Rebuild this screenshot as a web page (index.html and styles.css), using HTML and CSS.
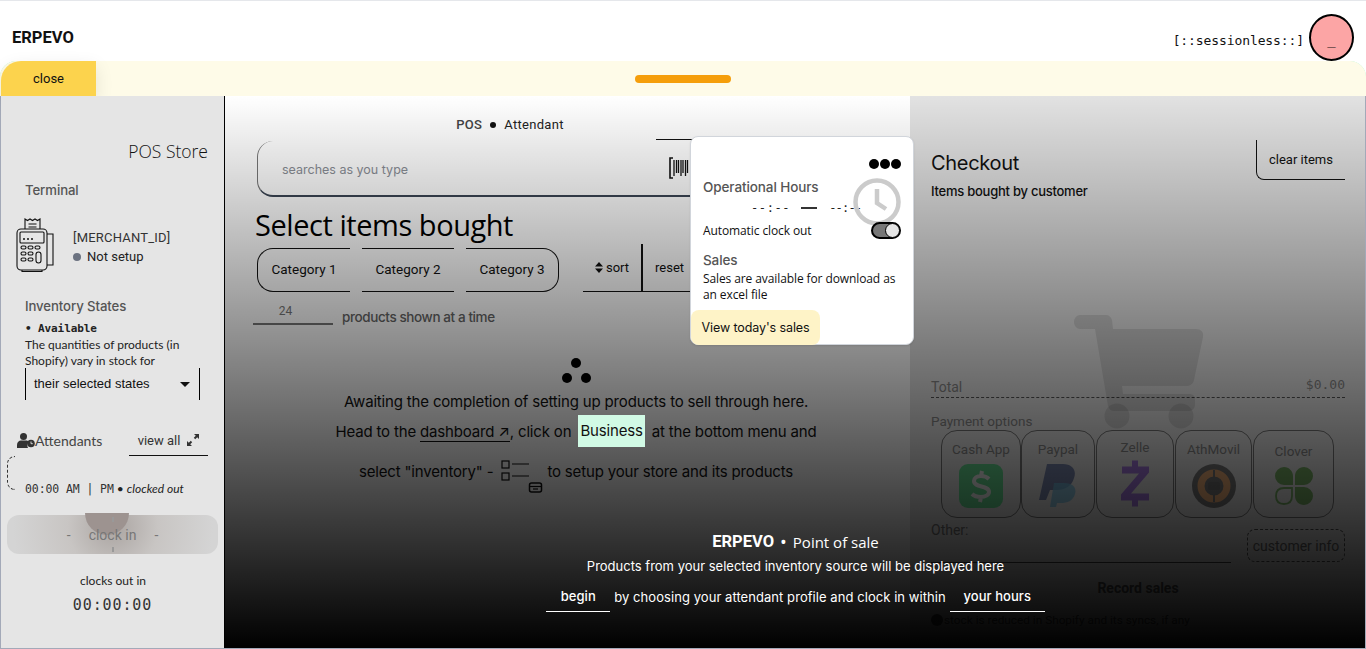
FILE: index.html
```html
<!DOCTYPE html>
<html lang="en">
<head>
<meta charset="utf-8">
<title>ERPEVO POS</title>
<link rel="stylesheet" href="styles.css">
</head>
<body>
<header class="topbar">
  <div class="brand">ERPEVO</div>
  <div class="session">
    <span class="session-text">[::sessionless::]</span>
    <span class="avatar">_</span>
  </div>
</header>
<div class="panel">
  <div class="drawerbar">
    <button class="close">close</button>
    <span class="handle"></span>
  </div>
  <div class="columns">
    <aside class="side">
      <div class="store">POS Store</div>
      <div class="side-head terminal-head">Terminal</div>
      <div class="terminal">
        <svg class="term-icon" viewBox="0 0 42 56" fill="none" stroke="#111" stroke-width="1.1">
          <path d="M9 13V3l2.5 1.5L14 3l2.5 1.5L19 3l2.500 1.500L24 3v10"/>
          <path d="M12.500 8h8M12.500 11h8"/>
          <rect x="1" y="13" width="30" height="41" rx="4"/>
          <rect x="4" y="16" width="24" height="11" rx="1"/>
          <path d="M7 23h2M11 23h2M15 23h2" stroke-width="1.400"/>
          <rect x="5" y="30" width="5" height="3" rx="1.500"/><rect x="12" y="30" width="5" height="3" rx="1.500"/><rect x="19" y="30" width="5" height="3" rx="1.500"/>
          <rect x="5" y="36" width="5" height="3" rx="1.500"/><rect x="12" y="36" width="5" height="3" rx="1.500"/>
          <rect x="5" y="42" width="5" height="3" rx="1.500"/><rect x="12" y="42" width="5" height="3" rx="1.500"/>
          <rect x="20" y="36" width="5" height="11" rx="2.500"/>
          <path d="M31 18h6v31h-6M6 54v1.500h20V54"/>
        </svg>
        <div class="term-info">
          <div class="merchant">[MERCHANT_ID]</div>
          <div class="status"><span class="dot"></span>Not setup</div>
        </div>
      </div>
      <div class="side-head inv-head">Inventory States</div>
      <div class="inv">
        <div class="avail">• Available</div>
        <p class="inv-text">The quantities of products (in Shopify) vary in stock for</p>
        <div class="state-select"><span>their selected states</span><i class="caret"></i></div>
      </div>
      <div class="attend-row">
        <div class="attend-title">
          <svg class="attend-icon" viewBox="0 0 18 15" fill="#333"><circle cx="6.500" cy="3.500" r="3.500"/><path d="M0 15v-3c0-3 2-4.500 4-4.500h5c1.500 0 2.500.5 3 1.500a5 5 0 0 0-1 6z"/><circle cx="14" cy="10.500" r="3.800"/><path d="M14 8.500v2.200h1.800" stroke="#e5e5e5" fill="none" stroke-width=".9"/></svg>
          <span>Attendants</span>
        </div>
        <div class="viewall">view all
          <svg class="expand" viewBox="0 0 12 12" fill="#333"><path d="M7 0h5v5l-1.800-1.800-2 2-1.400-1.400 2-2zM0 12V7l1.800 1.800 2-2 1.400 1.400-2 2L5 12z"/></svg>
        </div>
      </div>
      <div class="attend-card">
        <span class="arc"></span>
        <div class="clock-line"><span class="mono">00:00 AM | PM</span> • <em>clocked out</em></div>
      </div>
      <button class="clockin"><span class="tick t1"></span><span class="tick t2"></span><span>-</span><span class="ci-label">clock in</span><span>-</span></button>
      <div class="clocksout">clocks out in</div>
      <div class="timer">00:00:00</div>
    </aside>

    <div class="workspace">
      <main class="center">
        <div class="crumb"><b>POS</b><span class="bullet"></span><span>Attendant</span></div>
        <div class="search">
          <span class="placeholder">searches as you type</span>
          <span class="scan">
            <svg class="barcode" viewBox="0 0 20 22" fill="none" stroke="#111"><path d="M4 1H1v20h3" stroke-width="1.600"/><path d="M5 3v16M7.500 3v13M9.500 3v13M12 3v16M14 3v13M16.500 3v16M18.500 3v13" stroke-width="1.300"/></svg>
          </span>
        </div>
        <h1 class="title">Select items bought</h1>
        <div class="filters">
          <button class="cat cat-first">Category 1</button>
          <button class="cat cat-mid">Category 2</button>
          <button class="cat cat-last">Category 3</button>
          <div class="tools">
            <button class="tool sort"><svg class="updown" viewBox="0 0 8 11" fill="#111"><path d="M4 0l4 4.500H0zM4 11L0 6.500h8z"/></svg>sort</button>
            <button class="tool reset">reset</button>
          </div>
        </div>
        <div class="count">
          <span class="count-input">24</span>
          <span class="count-label">products shown at a time</span>
        </div>
        <div class="await">
          <svg class="dots" viewBox="0 0 30 26" fill="#000"><circle cx="15" cy="5" r="5"/><circle cx="6" cy="20" r="5"/><circle cx="25" cy="20" r="5"/></svg>
          <p class="line">Awaiting the completion of setting up products to sell through here.</p>
          <p class="line line2">Head to the <span class="link">dashboard ↗</span>, click on <span class="chip">Business</span> at the bottom menu and</p>
          <p class="line line3">select "inventory" - 
            <svg class="inv-icon" viewBox="0 0 42 33" fill="none" stroke="#111" stroke-width="1.200"><rect x="1" y="1" width="7" height="7"/><rect x="1" y="13" width="7" height="7"/><path d="M11 4h17M11 16h17"/><rect x="28.500" y="23" width="12" height="9" rx="2" stroke-width="1.500"/><path d="M29 26.500h11"/><path d="M32 29h5"/></svg>
            to setup your store and its products</p>
        </div>
      </main>
      <section class="checkout">
        <div class="co-head">
          <div>
            <h2 class="co-title">Checkout</h2>
            <div class="co-sub">Items bought by customer</div>
          </div>
          <button class="clear">clear items</button>
        </div>
        <svg class="cart" viewBox="0 0 130 114" fill="#000" fill-opacity=".1"><path d="M6 0h26c3 0 5 2 6 5l1 9h83c5 0 8 3 7 8l-9 43c-1 4-4 6-8 6H48l1 8h66c4 0 6 2 6 6v5c0 3-3 6-6 6H40c-3 0-5-2-6-5L21 14H6c-3 0-6-3-6-7s3-7 6-7z"/><circle cx="43" cy="101" r="12.500"/><circle cx="107" cy="101" r="12.500"/></svg>
        <div class="total"><span>Total</span><span class="amount">$0.00</span></div>
        <div class="pay-label">Payment options</div>
        <div class="pays">
          <div class="pay w1"><span>Cash App</span>
            <svg class="pay-icon" viewBox="0 0 44 44"><rect width="44" height="44" rx="9" fill="#00d64f"/><path d="M30 15c-2-2-5-3-8-3-4 0-7 2-7 5 0 7 15 4 15 11 0 3-4 5-8 5-4 0-7-1-9-3M23 7l-1 5M22 33l-1 5" fill="none" stroke="#fff" stroke-width="4"/></svg></div>
          <div class="pay w2"><span>Paypal</span>
            <svg class="pay-icon" viewBox="0 0 44 44"><path d="M10 36H3L11 0h16c9 0 14 6 11 14-2 8-9 12-17 12h-7z" fill="#253b80"/><path d="M20 43h-6l4-24h10c8 0 13 4 11 11-2 7-8 9-14 9h-4z" fill="#179bd7" opacity=".75"/></svg></div>
          <div class="pay w3 pay-up"><span>Zelle</span>
            <svg class="pay-icon zelle" viewBox="0 0 28 46"><path d="M11 0h6v6h11v6L10 33h18v7H17v6h-6v-6H0v-6l18-21H1V6h10z" fill="#6d1ed4"/></svg></div>
          <div class="pay w4"><span>AthMovil</span>
            <svg class="pay-icon" viewBox="0 0 44 44"><circle cx="22" cy="22" r="22" fill="#222"/><circle cx="22" cy="22" r="13" fill="none" stroke="#f58220" stroke-width="7"/><rect x="16" y="18" width="12" height="8" rx="2" fill="#111"/><path d="M22 6v10M22 28v10" stroke="#222" stroke-width="2"/></svg></div>
          <div class="pay w5 pay-down"><span>Clover</span>
            <svg class="pay-icon clover" viewBox="0 0 38 38" fill="#228800"><path d="M9 0c5 0 9 4 9 9v9H9a9 9 0 0 1 0-18zM29 0a9 9 0 0 1 0 18h-9V9c0-5 4-9 9-9zM20 20h9a9 9 0 0 1 0 18c-5 0-9-4-9-9z"/><path d="M9 21h8v8c0 5-3 8-8 8s-8-3-8-8 3-8 8-8z" fill="none" stroke="#228800" stroke-width="1.800"/></svg></div>
        </div>
        <div class="other-row">
          <div class="other">Other:</div>
          <button class="custinfo">customer info</button>
        </div>
        <div class="record">Record sales</div>
        <div class="note"><span class="info-dot"></span>stock is reduced in Shopify and its syncs, if any</div>
      </section>
      <div class="shade"></div>
      <div class="intro">
        <div class="intro-title"><b>ERPEVO</b><span class="intro-dot">•</span><span>Point of sale</span></div>
        <div class="intro-sub">Products from your selected inventory source will be displayed here</div>
        <div class="intro-steps"><span class="step">begin</span><span>by choosing your attendant profile and clock in within</span><span class="step step-wide">your hours</span></div>
      </div>
      <div class="popover">
        <div class="more"><i></i><i></i><i></i></div>
        <div class="pop-head">Operational Hours</div>
        <div class="hours"><span class="h1">--:--</span><span class="dash"></span><span class="h2">--:--</span></div>
        <svg class="pop-clock" viewBox="0 0 48 48" fill="none" stroke="#cbcbcb"><circle cx="24" cy="24" r="21.500" stroke-width="4.500"/><path d="M24 11v14l9 6" stroke-width="4.500"/></svg>
        <div class="auto"><span>Automatic clock out</span><span class="toggle"></span></div>
        <div class="pop-head sales-head">Sales</div>
        <p class="pop-text">Sales are available for download as an excel file</p>
        <button class="sales-btn">View today's sales</button>
      </div>
    </div>
  </div>
</div>
</body>
</html>
```

FILE: styles.css
```css
* { box-sizing: border-box; }
html, body { height: 100%; }
body { margin: 0; height: 649px; overflow: hidden; background: #fff; font-family: "Roboto", sans-serif; color: #111; display: flex; flex-direction: column; }
button { font: inherit; color: inherit; background: none; border: 0; padding: 0; }
p, h1, h2 { margin: 0; font-weight: 400; }

.topbar { height: 61px; flex: none; border-top: 1px solid #e5e7eb; display: flex; justify-content: space-between; padding: 0 12px; }
.brand { font: 700 16.500px "Roboto", sans-serif; line-height: 22px; margin-top: 26px; }
.session { display: flex; align-items: flex-start; }
.session-text { font: 13px/16px "DejaVu Sans Mono", monospace; letter-spacing: -.1px; margin-top: 32px; }
.avatar { width: 45px; height: 47px; border: 2px solid #000; border-radius: 50%; background: #fca5a5; margin: 13px 0 0 5px; text-align: center; font: 14px/46px "DejaVu Sans Mono", monospace; }

.panel { flex: 1; min-height: 0; display: flex; flex-direction: column; background: #a7f3d0; border-radius: 16px 16px 0 0; position: relative; }
.drawerbar { height: 35px; flex: none; background: #fefbe8; border-radius: 16px 16px 0 0; display: flex; align-items: center; position: relative; }
.close { width: 95px; height: 35px; background: #fcd34d; border-radius: 20px 0 0 0; font-size: 13px; box-shadow: 0 6px 18px rgba(0,0,0,.1); margin-left: 1px; margin-right: 539px; }
.handle { width: 96px; height: 8px; background: #f59e0b; border-radius: 4px; }

.columns { flex: 1; min-height: 0; display: flex; border: 1px solid #a3a9b8; border-width: 0 1px 1px 1px; }
.side { width: 224px; flex: none; background: #e5e5e5; border-right: 1px solid #000; display: flex; flex-direction: column; position: relative; }
.store { font: 300 17.500px/24px "Open Sans", sans-serif; text-align: right; padding-right: 16px; margin-top: 43px; color: #111; }
.side-head { font: 500 13.200px/16px "Inter", sans-serif; color: #555; margin-left: 24px; letter-spacing: -.1px; }
.terminal-head { margin-top: 19px; }
.terminal { display: flex; align-items: center; margin: 18px 0 0 15px; height: 56px; }
.term-icon { width: 42px; height: 56px; }
.term-info { margin-left: 15px; padding-top: 8px; }
.merchant { font: 400 13px/16px "Roboto", sans-serif; letter-spacing: .2px; color: #333; }
.status { font-size: 13px; line-height: 18px; margin-top: 2px; display: flex; align-items: center; color: #222; }
.dot { width: 8px; height: 8px; background: #6b7280; border-radius: 50%; margin-right: 6px; }
.inv-head { margin-top: 26px; }
.inv { margin: 8px 24px 0; }
.avail { font: 700 11px/14px "DejaVu Sans Mono", monospace; color: #222; letter-spacing: -.1px; }
.inv-text { font: 12px/16px "Lato", sans-serif; color: #222; margin-top: 1px; width: 170px; }
.state-select { width: 175px; height: 32px; border-left: 1px solid #000; border-right: 1px solid #000; display: flex; align-items: center; justify-content: space-between; padding: 0 9px 2px 8px; font: 13px "Liberation Sans", sans-serif; margin-top: -1px; }
.caret { width: 0; height: 0; border: 5px solid transparent; border-top: 5px solid #111; border-bottom: 0; margin-top: 2px; }
.attend-row { display: flex; justify-content: space-between; margin: 20px 16px 0 16px; height: 36px; }
.attend-title { display: flex; align-items: center; font: 14px "Lato", sans-serif; color: #444; margin-top: 4px; }
.attend-icon { width: 18px; height: 15px; }
.viewall { width: 79px; border-bottom: 1px solid #111; display: flex; align-items: center; justify-content: center; gap: 7px; font: 13px "Roboto", sans-serif; color: #333; margin-top: -1px; height: 37px; padding-top: 6px; }
.expand { width: 12px; height: 12px; }
.attend-card { position: relative; height: 34px; margin-top: 0; display: flex; align-items: flex-end; padding-left: 24px; }
.arc { width: 8px; height: 34px; border: 1px dashed #333; border-right: 0; border-radius: 8px 0 0 8px; position: absolute; left: 6px; top: 0; }
.clock-line { font: 12px/14px "Lato", sans-serif; color: #222; margin-bottom: -6px; }
.mono { font: 11.500px "DejaVu Sans Mono", monospace; letter-spacing: -.1px; color: #333; }
.clockin { width: 211px; height: 39px; margin: 25px 0 0 6px; border-radius: 12px; background: radial-gradient(circle 100px at 106px 12px, #aaa4a1 0, #c8c5c3 45%, #d4d4d4 100%); font-size: 14px; color: #777; display: flex; align-items: center; justify-content: center; gap: 18px; position: relative; overflow: visible; z-index: 0; }
.clockin::before { content: ""; position: absolute; left: 78px; top: -2px; width: 44px; height: 22px; background: #9d9390; border-radius: 0 0 22px 22px; z-index: -1; }
.tick { position: absolute; left: 105px; width: 2px; height: 5px; background: #999; }
.t1 { top: 2px; } .t2 { bottom: 2px; }
.clocksout { text-align: center; font: 12px/16px "Lato", sans-serif; color: #222; margin-top: 19px; padding-left: 1px; }
.timer { text-align: center; font: 15px/20px "DejaVu Sans Mono", monospace; letter-spacing: .9px; color: #333; margin-top: 6px; }

.workspace { flex: 1; min-width: 0; display: flex; position: relative; }
.center { width: 685px; flex: none; background: #fff; padding: 0 0 0 30px; }
.crumb { display: flex; align-items: center; justify-content: center; gap: 8px; font: 13px/16px "Roboto", sans-serif; margin-top: 21px; height: 16px; width: 510px; letter-spacing: .3px; color: #222; }
.crumb b { font-weight: 500; color: #444; }
.bullet { width: 6px; height: 6px; border-radius: 50%; background: #111; }
.search { margin-top: 8px; margin-left: 2px; height: 56px; width: 460px; border-left: 1px solid #777; border-bottom: 2px solid #3b4554; border-radius: 16px 0 0 16px; display: flex; align-items: center; justify-content: space-between; }
.placeholder { font: 12.500px "Inter", sans-serif; color: #8a8e96; margin: 3px 0 0 24px; }
.scan { width: 81px; height: 57px; border-top: 1px solid #111; margin: -1px -20px 0 0; display: flex; align-items: center; padding-left: 13px; }
.barcode { width: 20px; height: 22px; }
.title { font: 400 29px/36px "Open Sans", sans-serif; letter-spacing: -.45px; color: #000; margin-top: 10px; }
.filters { display: flex; margin: 5px 0 0 2px; height: 44px; }
.cat { width: 93px; height: 44px; border-top: 1px solid #111; border-bottom: 1px solid #111; font: 13.500px "Roboto", sans-serif; margin-right: 12px; padding-bottom: 2px; }
.cat-first { border-left: 1px solid #111; border-radius: 16px 0 0 16px; }
.cat-mid { width: 92px; }
.cat-last { border-right: 1px solid #111; border-radius: 0 16px 16px 0; margin-right: 24px; }
.tools { display: flex; align-items: flex-end; height: 48px; margin-top: -4px; }
.tool { height: 48px; border-bottom: 1px solid #111; font-size: 13px; display: flex; align-items: center; }
.sort { width: 60px; border-right: 2px solid #111; padding-left: 12px; gap: 3px; }
.reset { width: 50px; padding-left: 12px; }
.updown { width: 8px; height: 11px; }
.count { display: flex; align-items: flex-end; height: 26px; margin-top: 7px; margin-left: -2px; }
.count-input { width: 80px; height: 26px; border-bottom: 2px solid #777; text-align: center; font: 12px/25px "Roboto", sans-serif; color: #777; padding-right: 15px; display: block; }
.count-label { font: 500 13.500px/22px "Inter", sans-serif; color: #666; margin: 0 0 -3px 9px; letter-spacing: -.4px; }
.await { width: 584px; display: flex; flex-direction: column; align-items: center; margin-top: 33px; margin-left: 29px; }
.dots { width: 30px; height: 26px; margin-bottom: 6px; }
.line { font: 15px/24px "Inter", sans-serif; letter-spacing: -.17px; color: #111; white-space: nowrap; }
.line2 { margin-top: 2px; height: 32px; line-height: 32px; }
.line3 { margin-top: 7px; height: 34px; display: flex; align-items: center; gap: 6px; }
.link { border-bottom: 1px solid #111; }
.chip { background: #d1fae5; display: inline-block; padding: 0 2px; height: 32px; margin: 0 3px; position: relative; top: -1px; z-index: 3; color: #111; }
.inv-icon { width: 42px; height: 33px; margin: 8px -2px 0 2px; }

.checkout { flex: 1; background: #e2e2e2; padding: 44px 20px 0 21px; position: relative; }
.co-head { display: flex; justify-content: space-between; align-items: flex-start; }
.co-title { font: 400 20px/26px "Inter", sans-serif; letter-spacing: -.3px; margin-top: 10px; }
.co-sub { font: 500 13px/16px "Inter", sans-serif; letter-spacing: -.25px; margin-top: 7px; }
.clear { width: 89px; height: 40px; border-left: 1px solid #111; border-bottom: 1px solid #111; border-radius: 0 0 0 8px; font: 13px "Roboto", sans-serif; }
.cart { position: absolute; left: 164px; top: 219px; width: 130px; height: 114px; }
.total { margin-top: 174px; display: flex; justify-content: space-between; align-items: flex-end; border-bottom: 1px dashed #555; height: 25px; font: 14px/20px "Roboto", sans-serif; color: #888; }
.amount { font: 13px/20px "DejaVu Sans Mono", monospace; margin-bottom: 2px; }
.pay-label { font: 13.500px/18px "Roboto", sans-serif; color: #888; margin-top: 14px; }
.pays { display: flex; margin: 0 0 0 10px; }
.pay { height: 88px; border: 1px solid #777; border-radius: 16px; display: flex; flex-direction: column; align-items: center; font: 13.500px/18px "Roboto", sans-serif; color: #888; padding-top: 9px; gap: 6px; flex: none; }
.w1 { width: 80px; } .w2 { width: 74px; margin-right: 1px; } .w3 { width: 78px; margin-right: 1px; } .w4 { width: 77px; margin-right: 1px; } .w5 { width: 81px; }
.pay-up { padding-top: 7px; gap: 4px; }
.pay-down { padding-top: 11px; gap: 7px; }
.pay-icon { width: 44px; height: 44px; opacity: .55; }
.zelle { width: 28px; height: 47px; }
.clover { width: 38px; height: 38px; }
.other-row { display: flex; justify-content: space-between; margin-top: 3px; height: 42px; position: relative; }
.other { width: 300px; border-bottom: 1px solid #444; font: 14px/16px "Roboto", sans-serif; color: #777; height: 42px; padding-top: 1px; }
.custinfo { width: 98px; height: 33px; border: 1px dashed #555; border-radius: 8px; font: 14px "Roboto", sans-serif; color: #666; margin-top: 8px; }
.record { text-align: center; font: 700 14px/18px "Roboto", sans-serif; color: #555; margin-top: 16px; }
.note { font: 11.800px/18px "Roboto", sans-serif; color: #444; margin-top: 14px; display: flex; align-items: center; }
.info-dot { width: 12px; height: 12px; border-radius: 50%; background: #444; flex: none; margin-right: 1px; }

.shade { position: absolute; inset: 0; background: linear-gradient(to bottom, rgba(0,0,0,0), #000); pointer-events: none; z-index: 2; }
.intro { position: absolute; left: 0; top: 433px; height: 90px; z-index: 3; color: #fff; display: flex; flex-direction: column; align-items: center; width: 1141px; }
.intro-title { display: flex; align-items: center; gap: 6px; font: 15px/26px "Open Sans", sans-serif; }
.intro-title b { font: 700 16.500px/26px "Roboto", sans-serif; }
.intro-dot { font-size: 18px; }
.intro-sub { font: 13px/18px "Inter", sans-serif; margin-top: 2px; }
.intro-steps { display: flex; align-items: center; gap: 4px; font: 13px/18px "Inter", sans-serif; letter-spacing: .06px; margin-top: 7px; }
.step { width: 64px; height: 30px; border-bottom: 1px solid #fff; text-align: center; line-height: 29px; font-weight: 500; }
.step-wide { width: 95px; }

.popover { position: absolute; left: 465px; top: 40px; width: 224px; height: 209px; background: #fff; border: 1px solid #d1d5db; border-radius: 8px; z-index: 4; padding: 0 12px; box-shadow: 0 1px 2px rgba(0,0,0,.1); }
.more { display: flex; justify-content: flex-end; gap: 1px; margin-top: 22px; height: 12px; }
.more i { width: 10px; height: 10px; border-radius: 50%; background: #000; }
.pop-head { font: 500 13.500px/16px "Inter", sans-serif; color: #555; margin-top: 8px; letter-spacing: -.1px; }
.hours { display: flex; align-items: center; height: 14px; margin-top: 6px; font: 12px/14px "DejaVu Sans Mono", monospace; color: #222; position: relative; padding-left: 48px; }
.h1 { letter-spacing: .6px; } .dash { width: 16px; height: 2px; background: #333; margin: 0 12px 0 11px; }
.h2 { letter-spacing: -.8px; }
.pop-clock { position: absolute; left: 162px; top: 41px; width: 48px; height: 48px; }
.auto { display: flex; justify-content: space-between; align-items: center; margin-top: 7px; font: 12px/18px "Open Sans", sans-serif; letter-spacing: -.1px; position: relative; height: 18px; }
.toggle { width: 30px; height: 17px; border-radius: 9px; background: #777; border: 2px solid #000; position: relative; margin-top: -2px; }
.toggle::after { content: ""; position: absolute; right: -1px; top: -1px; width: 13px; height: 13px; background: #e5e5e5; border: 1px solid #000; border-radius: 50%; }
.sales-head { margin-top: 12px; }
.pop-text { font: 12px/16px "Open Sans", sans-serif; letter-spacing: -.1px; margin-top: 3px; color: #111; }
.sales-btn { display: block; width: 129px; height: 35px; background: #fef3c7; border-radius: 8px; font: 12.500px "Inter", sans-serif; margin: 7px 0 0 -12px; letter-spacing: -.1px; }
```
